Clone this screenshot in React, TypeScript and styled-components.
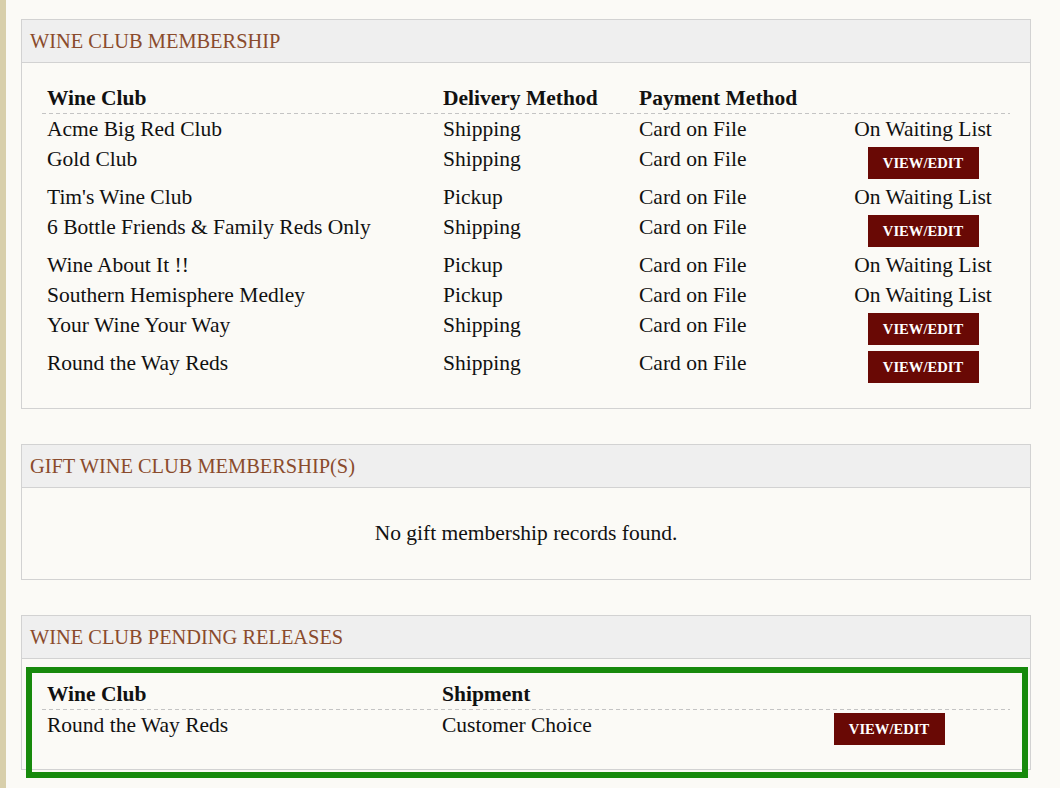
import React from 'react';
import styled, { createGlobalStyle } from 'styled-components';

const GlobalStyle = createGlobalStyle`
  html, body {
    margin: 0;
    padding: 0;
    background: #fbfaf6;
  }
  body {
    font-family: 'Liberation Serif', 'Times New Roman', serif;
    color: #111;
  }
`;

const Page = styled.div`
  min-height: 100vh;
  box-sizing: border-box;
  border-left: 6px solid #d8cfab;
  padding: 19px 29px 0 15px;
  display: flex;
  flex-direction: column;
  gap: 35px;
`;

const Panel = styled.section`
  position: relative;
  border: 1px solid #d2d2d2;
  background: #fbfaf6;
`;

const PanelHeader = styled.h2`
  margin: 0;
  height: 42px;
  display: flex;
  align-items: center;
  padding: 0 8px;
  background: #efefef;
  border-bottom: 1px solid #d2d2d2;
  color: #8a4b2c;
  font-weight: normal;
  font-size: 20.4px;
  text-transform: uppercase;
`;

const PanelBody = styled.div<{ $padTop?: number; $padBottom?: number }>`
  position: relative;
  padding: ${p => p.$padTop ?? 20}px 20px ${p => p.$padBottom ?? 22}px;
`;

const Row = styled.div<{ $cols: string; $head?: boolean }>`
  display: grid;
  grid-template-columns: ${p => p.$cols};
  align-items: start;
  font-size: 21.5px;
  line-height: 30px;
  font-weight: ${p => (p.$head ? 'bold' : 'normal')};
  padding-bottom: ${p => (p.$head ? '1px' : '0')};
  background: ${p =>
    p.$head
      ? 'repeating-linear-gradient(to right, #c4c4c4 0 4px, transparent 4px 7px) left bottom / 100% 1px no-repeat'
      : 'none'};
`;

const Cell = styled.div<{ $center?: boolean }>`
  padding: 0 5px;
  white-space: nowrap;
  text-align: ${p => (p.$center ? 'center' : 'left')};
`;

const ActionButton = styled.button`
  margin: 3px 0;
  width: 111px;
  height: 32px;
  border: none;
  background: #690905;
  color: #fff;
  font-family: 'Liberation Serif', 'Times New Roman', serif;
  font-weight: bold;
  font-size: 14.6px;
  cursor: pointer;
  vertical-align: top;
`;

const EmptyMessage = styled.p`
  margin: 0;
  font-size: 21.5px;
  line-height: 30px;
  text-align: center;
`;

const Highlight = styled.div`
  position: absolute;
  top: 8px;
  left: 4px;
  right: 2px;
  height: 111px;
  box-sizing: border-box;
  border: 6px solid #178a0c;
  pointer-events: none;
`;

type Membership = {
  club: string;
  delivery: string;
  payment: string;
  waiting: boolean;
};

const memberships: Membership[] = [
  { club: 'Acme Big Red Club', delivery: 'Shipping', payment: 'Card on File', waiting: true },
  { club: 'Gold Club', delivery: 'Shipping', payment: 'Card on File', waiting: false },
  { club: "Tim's Wine Club", delivery: 'Pickup', payment: 'Card on File', waiting: true },
  { club: '6 Bottle Friends & Family Reds Only', delivery: 'Shipping', payment: 'Card on File', waiting: false },
  { club: 'Wine About It !!', delivery: 'Pickup', payment: 'Card on File', waiting: true },
  { club: 'Southern Hemisphere Medley', delivery: 'Pickup', payment: 'Card on File', waiting: true },
  { club: 'Your Wine Your Way', delivery: 'Shipping', payment: 'Card on File', waiting: false },
  { club: 'Round the Way Reds', delivery: 'Shipping', payment: 'Card on File', waiting: false },
];

const memberCols = '396px 196px 202px 1fr';
const pendingCols = '395px 331px 1fr';

const App: React.FC = () => (
  <>
    <GlobalStyle />
    <Page>
      <Panel>
        <PanelHeader>Wine Club Membership</PanelHeader>
        <PanelBody>
          <Row $cols={memberCols} $head>
            <Cell>Wine Club</Cell>
            <Cell>Delivery Method</Cell>
            <Cell>Payment Method</Cell>
            <Cell />
          </Row>
          {memberships.map(m => (
            <Row key={m.club} $cols={memberCols}>
              <Cell>{m.club}</Cell>
              <Cell>{m.delivery}</Cell>
              <Cell>{m.payment}</Cell>
              <Cell $center>
                {m.waiting ? 'On Waiting List' : <ActionButton>VIEW/EDIT</ActionButton>}
              </Cell>
            </Row>
          ))}
        </PanelBody>
      </Panel>

      <Panel>
        <PanelHeader>Gift Wine Club Membership(s)</PanelHeader>
        <PanelBody $padTop={30} $padBottom={31}>
          <EmptyMessage>No gift membership records found.</EmptyMessage>
        </PanelBody>
      </Panel>

      <Panel>
        <PanelHeader>Wine Club Pending Releases</PanelHeader>
        <PanelBody $padTop={20} $padBottom={21}>
          <Row $cols={pendingCols} $head>
            <Cell>Wine Club</Cell>
            <Cell>Shipment</Cell>
            <Cell />
          </Row>
          <Row $cols={pendingCols}>
            <Cell>Round the Way Reds</Cell>
            <Cell>Customer Choice</Cell>
            <Cell $center>
              <ActionButton>VIEW/EDIT</ActionButton>
            </Cell>
          </Row>
          <Highlight />
        </PanelBody>
      </Panel>
    </Page>
  </>
);

export default App;
